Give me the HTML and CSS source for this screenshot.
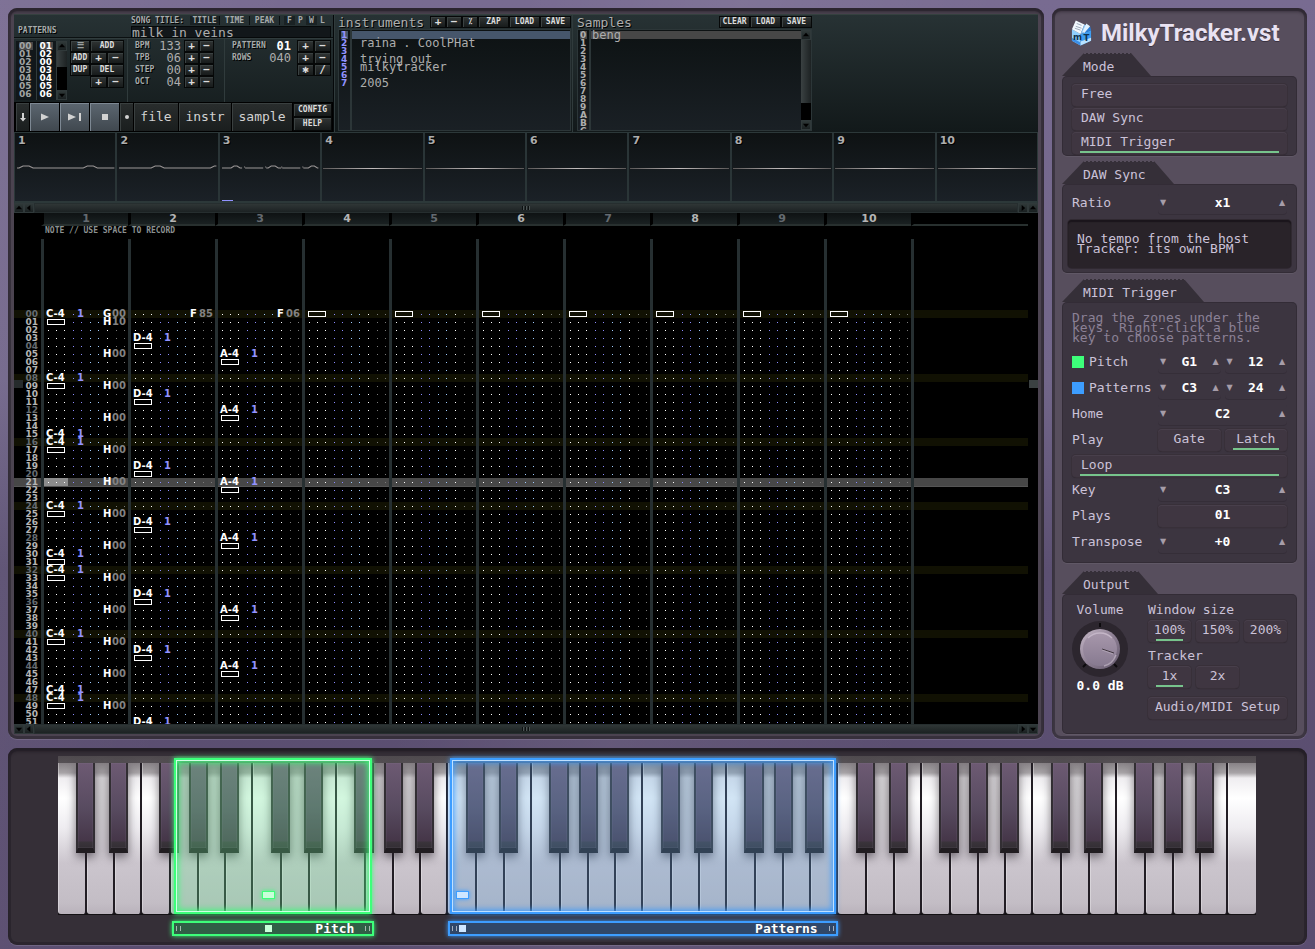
FILE: index.html
```html
<!DOCTYPE html>
<html lang="en">
<head>
<meta charset="utf-8">
<title>MilkyTracker.vst</title>
<link rel="stylesheet" href="styles.css">
</head>
<body>
<main class="tracker frame">
  <section class="deck">
    <div class="control">
      <div class="control-head">
        <span class="tiny patterns-label">PATTERNS</span>
        <div class="song">
          <div class="song-tabs tiny">
            <label for="song" class="song-label">SONG TITLE:</label>
            <button class="tab on">TITLE</button><button class="tab">TIME</button><button class="tab">PEAK</button>
            <span class="flags"><button class="flag on">F</button><button class="flag">P</button><button class="flag on">W</button><button class="flag">L</button></span>
          </div>
          <input id="song" class="song-title" value="milk in veins" spellcheck="false">
        </div>
      </div>
      <div class="control-mid">
        <div class="orders">
          <div class="order-list">
            <ol class="nums dim"><li class="sel">00</li><li>01</li><li>02</li><li>03</li><li>04</li><li>05</li><li>06</li></ol>
            <ol class="nums lit"><li class="sel">01</li><li>02</li><li>00</li><li>03</li><li>04</li><li>05</li><li>06</li></ol>
            <div class="vbar"><button class="arrow" aria-label="Up"><svg viewBox="0 0 9 9"><path d="M1 6h7L4.500 2z"/></svg></button><i class="thumb short"></i><i class="track"></i><button class="arrow" aria-label="Down"><svg viewBox="0 0 9 9"><path d="M1 3h7L4.500 7z"/></svg></button></div>
          </div>
          <div class="order-buttons">
            <button class="btn menu">☰</button><button class="btn wide">ADD</button>
            <button class="btn">ADD</button><button class="btn sign">+</button><button class="btn sign">−</button>
            <button class="btn">DUP</button><button class="btn wide">DEL</button>
            <button class="btn sign second">+</button><button class="btn sign">−</button>
          </div>
        </div>
        <div class="params bpm">
          <span class="tiny">BPM</span><output>133</output><button class="btn sign">+</button><button class="btn sign">−</button>
          <span class="tiny">TPB</span><output>06</output><button class="btn sign">+</button><button class="btn sign">−</button>
          <span class="tiny">STEP</span><output>00</output><button class="btn sign">+</button><button class="btn sign">−</button>
          <span class="tiny">OCT</span><output>04</output><button class="btn sign">+</button><button class="btn sign">−</button>
        </div>
        <div class="params pat">
          <span class="tiny">PATTERN</span><output class="hot">01</output><button class="btn sign">+</button><button class="btn sign">−</button>
          <span class="tiny">ROWS</span><output>040</output><button class="btn sign">+</button><button class="btn sign">−</button>
          <span></span><span></span><button class="btn sign">✱</button><button class="btn sign">/</button>
        </div>
      </div>
      <div class="transport">
        <button class="big s" aria-label="Follow"><svg viewBox="0 0 10 10"><path d="M4 1h2v5h2L5 9.500 2 6h2z"/></svg></button>
        <button class="big play" aria-label="Play"><svg viewBox="0 0 10 10"><path d="M1 1.500v7L9 5z"/></svg></button>
        <button class="big play" aria-label="Play pattern"><svg class="w" viewBox="0 0 14 10"><path d="M0 1.500v7L8 5zM11 1h2v8h-2z"/></svg></button>
        <button class="big play" aria-label="Stop"><svg viewBox="0 0 10 10"><path d="M2 2h6v6H2z"/></svg></button>
        <button class="big s" aria-label="Record"><svg viewBox="0 0 10 10"><circle cx="5" cy="5" r="2"/></svg></button>
        <button class="big file">file</button><button class="big instr">instr</button><button class="big sample">sample</button>
        <div class="stack"><button class="btn">CONFIG</button><button class="btn">HELP</button></div>
      </div>
    </div>
    <div class="bank instruments">
      <div class="bank-head"><h2>instruments</h2><span class="group"><button class="btn sign k">+</button><button class="btn sign k">−</button><button class="btn k">⁒</button><button class="btn">ZAP</button><button class="btn">LOAD</button><button class="btn">SAVE</button></span></div>
      <div class="list">
        <ol class="nums blue"><li class="sel">1</li><li>2</li><li>3</li><li>4</li><li>5</li><li>6</li><li>7</li></ol>
        <ul class="names"><li class="sel"></li><li>raina . CoolPHat</li><li></li><li>trying out</li><li>milkytracker</li><li></li><li>2005</li></ul>
      </div>
    </div>
    <div class="bank samples">
      <div class="bank-head"><h2>Samples</h2><span class="group"><button class="btn">CLEAR</button><button class="btn">LOAD</button><button class="btn">SAVE</button></span></div>
      <div class="list">
        <ol class="nums"><li class="sel">0</li><li>1</li><li>2</li><li>3</li><li>4</li><li>5</li><li>6</li><li>7</li><li>8</li><li>9</li><li>A</li><li>B</li><li>C</li></ol>
        <ul class="names"><li class="sel">beng</li></ul>
        <div class="vbar"><button class="arrow" aria-label="Up"><svg viewBox="0 0 9 9"><path d="M1 6h7L4.500 2z"/></svg></button><i class="thumb"></i><i class="track"></i><button class="arrow" aria-label="Down"><svg viewBox="0 0 9 9"><path d="M1 3h7L4.500 7z"/></svg></button></div>
      </div>
    </div>
  </section>
  <section class="scopes" id="scopes"></section>
  <div class="hbar"><button class="arrow" aria-label="Up"><svg viewBox="0 0 9 9"><path d="M1 6h7L4.500 2z"/></svg></button><button class="arrow" aria-label="Left"><svg viewBox="0 0 9 9"><path d="M6 1v7L2 4.500z"/></svg></button><i class="slide"></i><button class="arrow" aria-label="Right"><svg viewBox="0 0 9 9"><path d="M3 1v7l4-3.500z"/></svg></button><button class="arrow" aria-label="Up"><svg viewBox="0 0 9 9"><path d="M1 6h7L4.500 2z"/></svg></button></div>
  <section class="pattern">
    <i class="marker"></i><i class="marker end"></i>
    <table class="grid">
      <colgroup><col class="c-num"><col class="c-ch" span="10"><col></colgroup>
      <thead id="head"></thead>
      <tbody id="rows"></tbody>
    </table>
  </section>
  <div class="hbar"><button class="arrow" aria-label="Down"><svg viewBox="0 0 9 9"><path d="M1 3h7L4.500 7z"/></svg></button><button class="arrow" aria-label="Left"><svg viewBox="0 0 9 9"><path d="M6 1v7L2 4.500z"/></svg></button><i class="slide"></i><button class="arrow" aria-label="Right"><svg viewBox="0 0 9 9"><path d="M3 1v7l4-3.500z"/></svg></button><button class="arrow" aria-label="Down"><svg viewBox="0 0 9 9"><path d="M1 3h7L4.500 7z"/></svg></button></div>
</main>

<aside class="side frame">
  <header class="brand">
    <svg class="logo" viewBox="0 0 22 28">
      <path d="M1 10l9 5v12L1 22z" fill="#8fd0ff"/><path d="M1 19l9 5v3L1 22z" fill="#3b8fe8"/>
      <path d="M10 15l11-4v11l-11 5z" fill="#3f9df0"/><path d="M10 23l11-4v3l-11 5z" fill="#b9e2ff"/>
      <path d="M1 10L5 1l9 4-4 10z" fill="#f2f9ff"/><path d="M10 15l4-10 2 1-3 8z" fill="#8ac6f8"/><path d="M13 14l7-7 1 4z" fill="#2a7fdc"/><path d="M12 13l4-9 4 3-6 7z" fill="#dff1ff"/>
      <path d="M6 4l5 2M5 7l6 2M4 9l6 2" stroke="#9aa7b8" fill="none"/>
      <text x="2" y="21" class="logo-text">m</text><text x="13" y="22" class="logo-text">T</text>
    </svg>
    <h1>MilkyTracker.vst</h1>
  </header>

  <section class="group-box">
    <h2 class="cap mode-cap">Mode</h2>
    <div class="box mode">
      <button class="key left">Free</button><button class="key left">DAW Sync</button><button class="key left on">MIDI Trigger</button>
    </div>
  </section>

  <section class="group-box second-box">
    <h2 class="cap daw-cap">DAW Sync</h2>
    <div class="box daw">
      <div class="row"><span>Ratio</span><div class="step"><button aria-label="Lower">▼</button><output>x1</output><button aria-label="Raise">▲</button></div></div>
      <p class="lcd">No tempo from the host<br>Tracker: its own BPM</p>
    </div>
  </section>

  <section class="group-box third-box">
    <h2 class="cap midi-cap">MIDI Trigger</h2>
    <div class="box midi">
      <p class="hint">Drag the zones under the<br>keys. Right-click a blue<br>key to choose patterns.</p>
      <div class="row"><span class="sw green">Pitch</span><div class="step"><button aria-label="Lower">▼</button><output>G1</output><button aria-label="Raise">▲</button></div><div class="step"><button aria-label="Lower">▼</button><output>12</output><button aria-label="Raise">▲</button></div></div>
      <div class="row"><span class="sw azure">Patterns</span><div class="step"><button aria-label="Lower">▼</button><output>C3</output><button aria-label="Raise">▲</button></div><div class="step"><button aria-label="Lower">▼</button><output>24</output><button aria-label="Raise">▲</button></div></div>
      <div class="row"><span>Home</span><div class="step"><button aria-label="Lower">▼</button><output>C2</output><button aria-label="Raise">▲</button></div></div>
      <div class="row"><span>Play</span><button class="key">Gate</button><button class="key on">Latch</button></div>
      <button class="key left on loop">Loop</button>
      <div class="row"><span>Key</span><div class="step"><button aria-label="Lower">▼</button><output>C3</output><button aria-label="Raise">▲</button></div></div>
      <div class="row"><span>Plays</span><button class="key bright">01</button></div>
      <div class="row"><span>Transpose</span><div class="step"><button aria-label="Lower">▼</button><output>+0</output><button aria-label="Raise">▲</button></div></div>
    </div>
  </section>

  <section class="group-box last">
    <h2 class="cap out-cap">Output</h2>
    <div class="box output">
      <div class="volume">
        <label for="vol">Volume</label>
        <div class="knob">
          <svg viewBox="0 0 56 56">
            <defs><linearGradient id="kg" x1="0" y1="0" x2="1" y2="1"><stop offset="0" stop-color="#c9bccb"/><stop offset=".5" stop-color="#8d7f93"/><stop offset="1" stop-color="#655a6e"/></linearGradient>
            <linearGradient id="kf" x1="0" y1="0" x2="0" y2="1"><stop offset="0" stop-color="#a898ac"/><stop offset="1" stop-color="#877a90"/></linearGradient></defs>
            <circle cx="28" cy="28" r="28" fill="#2c262e"/>
            <path d="M28 2v4M11 46l3-3M45 46l-3-3" stroke="#0c0a0d" stroke-width="2"/>
            <circle cx="28" cy="28" r="20" fill="url(#kg)"/><circle cx="28" cy="28" r="17" fill="url(#kf)"/>
            <path d="M16 17a17 17 0 0 1 24 0M44 34a17 17 0 0 1-12 11" stroke="#e2d5e4" stroke-width="1.500" fill="none" opacity=".5"/>
            <path d="M30 28l12 4" stroke="#40363f"/><path d="M30 29l11 4" stroke="#b9adbd" stroke-width=".7"/>
          </svg>
          <input id="vol" type="range" min="-48" max="12" value="0">
        </div>
        <output for="vol">0.0 dB</output>
      </div>
      <div class="opts">
        <h3>Window size</h3>
        <div class="trio"><button class="key on">100%</button><button class="key">150%</button><button class="key">200%</button></div>
        <h3>Tracker</h3>
        <div class="trio"><button class="key on">1x</button><button class="key">2x</button></div>
        <button class="key setup">Audio/MIDI Setup</button>
      </div>
    </div>
  </section>
</aside>

<section class="piano frame">
  <div class="keybed">
    <div class="keys" id="keys"></div>
    <div class="zone pitch"></div>
    <div class="zone patterns"></div>
    <i class="pin pin-g"></i><i class="pin pin-b"></i>
  </div>
  <div class="ranges">
    <div class="range pitch"><i class="grip"></i><i class="dot mid"></i><span>Pitch</span><i class="grip"></i></div>
    <div class="range patterns"><i class="grip"></i><i class="dot start"></i><span>Patterns</span><i class="grip"></i></div>
  </div>
</section>
<script src="app.js"></script>
</body>
</html>
```

FILE: app.js
```javascript
const CHANNELS = [
  { note: 'C-4', on: [0, 8, 15, 16, 24, 30, 32, 40, 47, 48], off: [1, 9, 17, 25, 31, 33, 41, 49],
    fx: { 0: 'G00', 1: 'H10', 5: 'H00', 9: 'H00', 13: 'H00', 17: 'H00', 21: 'H00', 25: 'H00', 29: 'H00', 33: 'H00', 37: 'H00', 41: 'H00', 45: 'H00', 49: 'H00' } },
  { note: 'D-4', on: [3, 10, 19, 26, 35, 42, 51], off: [4, 11, 20, 27, 36, 43], fx: { 0: 'F85' } },
  { note: 'A-4', on: [5, 12, 21, 28, 37, 44], off: [6, 13, 22, 29, 38, 45], fx: { 0: 'F06' } }
];
while (CHANNELS.length < 10) CHANNELS.push({ note: '', on: [], off: [0], fx: {} });

// Pattern header: channel numbers, status line, empty lead-in
const gaps = '<td></td>'.repeat(11);
document.getElementById('head').innerHTML =
  '<tr class="chans"><td></td>' + CHANNELS.map((c, i) => `<th class="${i % 2 ? 'even' : 'odd'}">${i + 1}</th>`).join('') + '<td></td></tr>' +
  '<tr class="status"><td></td><td colspan="11" class="tiny">NOTE // USE SPACE TO RECORD</td></tr>' +
  `<tr class="lead"><td></td>${gaps}</tr>`;

function cell(c, r) {
  const note = c.on.includes(r) ? `<b class="note">${c.note}</b><b class="ins">1</b>`
    : c.off.includes(r) ? '<i class="note off"></i><i class="d ins0"></i>'
    : '<i class="d n0"></i><i class="d ins0"></i>';
  const f = c.fx[r];
  const fx = f ? `<b class="fx">${f[0]}</b><b class="val">${f.slice(1)}</b>` : '<i class="d f0"></i><i class="d v0"></i>';
  return `<td><div class="cell">${note}<i class="d vol"></i>${fx}</div></td>`;
}
let rows = '';
for (let r = 0; r < 52; r++) {
  const cls = (r % 8 ? '' : 'beat ') + (r % 4 ? '' : 'quarter ') + (r === 21 ? 'current' : '');
  rows += `<tr class="${cls}"><th>${String(r).padStart(2, '0')}</th>${CHANNELS.map(c => cell(c, r)).join('')}<td></td></tr>`;
}
document.getElementById('rows').innerHTML = rows;

// Oscilloscopes
const WAVES = {
  1: 'M2 5h2l4-2h6l4 2h50l4-2h6l4 2h17',
  2: 'M2 5h32l4-2h5l4 2h46l4-2h2',
  3: 'M2 5h9l3-2h3l3 2h2M24 4h1M25 5h18M45 4h1M46 5h2l3-2h4l3 2h3M61 4h1M62 5h18M82 4h1M83 5h5l3-2h3l3 2h1'
};
document.getElementById('scopes').innerHTML = CHANNELS.map((c, i) => {
  const w = WAVES[i + 1];
  return `<div class="scope"><span>${i + 1}</span>${w
    ? `<svg viewBox="0 0 100 8" preserveAspectRatio="none"><path d="${w}"/></svg>`
    : '<i class="flat"></i>'}${i === 2 ? '<i class="level"></i>' : ''}</div>`;
}).join('');

// Six octaves and a top C
const NAMES = ['c', 'd', 'e', 'f', 'g', 'a', 'b'], SHARPS = ['cs', 'ds', 'fs', 'gs', 'as'];
let keys = '';
for (let o = 0; o < 6; o++) {
  keys += '<div class="octave">' + NAMES.map(n => `<button class="white k-${n}" aria-label="${n}${o}"></button>`).join('') +
    SHARPS.map(n => `<button class="black ${n}" aria-label="${n}${o}"></button>`).join('') + '</div>';
}
document.getElementById('keys').innerHTML = keys + '<button class="white top" aria-label="c6"></button>';
```

FILE: styles.css
```css
* { box-sizing: border-box; }
body {
  margin: 0; height: 100vh; padding: 8px 8px 4px;
  display: grid; grid-template-columns: minmax(0, 1fr) 255px; grid-template-rows: minmax(0, 1fr) 197px; gap: 9px 8px;
  font: 13px/10px "DejaVu Sans Mono", "Liberation Mono", monospace; color: #cbc2d8;
  background: linear-gradient(100deg, rgba(255,255,255,.05), transparent 20% 35%, rgba(255,255,255,.06) 50%, transparent 70%), linear-gradient(#786b91, #72668a 40%, #5c5072 60%, #5a4d70);
}
button, input { font: inherit; color: inherit; border: 0; margin: 0; padding: 0; background: none; }
button { display: flex; align-items: center; justify-content: center; }
h1, h2, h3, p, ol, ul { margin: 0; padding: 0; font-weight: normal; font-size: inherit; list-style: none; }
i { display: block; font-style: normal; }
.frame { border-radius: 9px; box-shadow: inset 0 0 0 3px rgba(32,27,36,.45), inset 0 4px 3px rgba(20,16,22,.4), 0 1px rgba(255,255,255,.12); background: #4b4350; }
.tiny { font: bold 8px/8px "DejaVu Sans Mono", monospace; color: #a6abab; text-shadow: 1px 1px #000; }

/* Tracker */
.tracker { padding: 6px 6px 5px; display: flex; flex-direction: column; min-height: 0; }
.deck { display: flex; height: 118px; flex: none; background: linear-gradient(#273234, #12191a); color: #adadad; border-top: 1px solid #35413f; }
.control { width: 320px; border-right: 1px solid #05080a; display: flex; flex-direction: column; }
.control-head { height: 23px; display: flex; justify-content: space-between; padding: 0 2px 0 4px; border-bottom: 1px solid #0b1011; }
.patterns-label { padding-top: 12px; }
.song { width: 200px; }
.song-tabs { display: flex; height: 11px; align-items: center; }
.song-label { width: 59px; }
.tab { width: 30px; height: 9px; border-right: 1px solid #0a0f10; }
.on.tab, .on.flag { background: #1a2224; }
.flags { display: flex; margin-left: 4px; }
.flag { width: 11px; height: 9px; }
.song-title { display: block; width: 100%; height: 12px; line-height: 10px; background: #12171a; border: 1px solid #06090a; color: #adadad; }
.control-mid { display: flex; height: 64px; border-top: 1px solid #303b3c; }
.orders { width: 114px; display: flex; gap: 3px; padding: 2px 0 0 2px; border-right: 1px solid #303b3c; }
.order-list { display: flex; width: 51px; height: 59px; background: #11171a; overflow: hidden; flex: none; }
.nums { font: bold 9px/8px "DejaVu Sans", sans-serif; }
.nums li { height: 8px; }
.order-list .nums { width: 21px; padding: 1px 3px 0; border-right: 1px solid #303b3c; }
.order-list .sel, .samples .sel { background: #474747; }
.dim { color: #a0a4a4; }
.lit { color: #fff; }
.vbar { width: 10px; display: flex; flex-direction: column; background: #000; margin-left: auto; }
.arrow { width: 10px; height: 10px; flex: none; background: linear-gradient(#2f3838, #1a2021); border: 1px solid #30393a; }
.arrow svg { width: 8px; height: 8px; flex: none; fill: #000; }
.thumb { height: 63px; background: linear-gradient(90deg, #3a4142, #1d2223); }
.thumb.short { height: 16px; }
.track { flex: 1; }
.order-buttons { display: grid; grid-template-columns: 20px 17px 17px; grid-auto-rows: 12px; align-content: start; margin-top: -1px; }
.btn { font: bold 8px/8px "DejaVu Sans Mono", monospace; color: #dcdcdc; background: linear-gradient(#303434, #171b1b); border: 1px solid #060808; box-shadow: inset 1px 1px #3b4242; height: 12px; }
.btn.sign { font-size: 11px; }
.btn.wide { grid-column: 2 / 4; }
.btn.second { grid-column: 2; }
.btn.menu { color: #9a9f9f; }
.params { display: grid; grid-auto-rows: 12px; align-content: start; align-items: center; padding: 1px 2px 0 7px; }
.params .btn { align-self: stretch; }
.params output { text-align: right; padding-right: 3px; font-size: 12px; }
.bpm { width: 97px; grid-template-columns: 24px 1fr 15px 15px; border-right: 1px solid #303b3c; padding-right: 10px; }
.pat { flex: 1; grid-template-columns: 37px 1fr 17px 17px; }
.params .hot { color: #fff; font-weight: bold; }
.pat output { padding-right: 6px; }
.transport { flex: 1; display: flex; gap: 1px; background: #000; padding: 1px 1px 1px 2px; }
.big { background: linear-gradient(#292d2d, #1a1e1e); box-shadow: inset 1px 1px #3a4040; color: #d2d2d2; }
.big svg { width: 10px; height: 10px; fill: #d2d2d2; }
.big svg.w { width: 14px; }
.s { width: 13px; }
.play { width: 29px; background: linear-gradient(#5c6670, #40484f); box-shadow: inset 1px 1px #7d8893; }
.file { width: 44px; }
.instr { width: 52px; }
.sample { width: 60px; }
.stack { flex: 1; display: grid; grid-template-rows: 1fr 1fr; }
.stack .btn { height: auto; }
.bank { display: flex; flex-direction: column; padding: 1px 1px 1px 3px; border-left: 1px solid #303b3c; }
.instruments { width: 238px; }
.samples { width: 241px; padding-left: 4px; }
.bank-head { display: flex; justify-content: space-between; height: 13px; }
.bank-head h2 { padding-top: 2px; text-shadow: 1px 1px #000; }
.bank-head .group { display: flex; }
.bank-head .btn { width: 31px; }
.bank-head .btn.k { width: 16px; }
.list { flex: 1; min-height: 0; display: flex; background: linear-gradient(#0d1213, #1a2025); border: 1px solid #2c3638; overflow: hidden; }
.list .nums { width: 13px; padding: 1px 2px 0; border-right: 2px solid #2c3638; flex: none; }
.names { flex: 1; padding-top: 1px; font-size: 12px; }
.names li { height: 8px; line-height: 8px; padding-left: 8px; white-space: pre; }
.samples .names li { padding-left: 1px; }
.blue { color: #9292ff; }
.instruments .sel { background: #46566b; }
.scopes { display: flex; height: 71px; flex: none; border: 1px solid #2c3839; border-width: 1px 1px 2px; }
.scope { flex: 1; position: relative; background: linear-gradient(#0e1213, #1b2127); border-right: 2px solid #2a3537; display: flex; align-items: center; color: #adadad; }
.scope:last-child { border: 0; }
.scope span { position: absolute; left: 3px; top: 3px; font: bold 11px/10px "DejaVu Sans", sans-serif; text-shadow: 1px 1px #000; }
.scope svg { width: 100%; height: 8px; fill: none; stroke: #9c9797; stroke-width: 1; }
.flat { flex: 1; height: 1px; background: linear-gradient(90deg, #5a5757, #c3bdbd, #5a5757); margin: 2px 1px 0; }
.level { position: absolute; left: 2px; bottom: 0; width: 11px; height: 1px; background: #9292ff; }
.hbar { display: flex; height: 10px; flex: none; }
.slide { flex: 1; border: 1px solid #262e2f; background: repeating-linear-gradient(90deg, #0c1010 0 1px, #4b5353 1px 2px, transparent 2px 3px) center / 9px 4px no-repeat, linear-gradient(#2f3636, #1c2223); }

/* Pattern editor */
.pattern { position: relative; flex: 1; min-height: 0; overflow: hidden; background: #000; padding-right: 10px; }
.marker { position: absolute; left: 0; top: 167px; width: 9px; height: 8px; background: #262b2c; }
.marker.end { left: auto; right: 0; background: #3b4142; }
.grid { width: 100%; table-layout: fixed; border-spacing: 0; border-collapse: separate; color: #fff; }
.c-num { width: 27px; }
.c-ch { width: 87px; }
.grid td, .grid th { padding: 0; height: 8px; line-height: 8px; }
.grid .chans th, .grid .chans td { height: 13px; border-left: 3px solid #000; border-bottom: 2px solid #28302f; }
.grid .chans th { background: linear-gradient(#0e1213, #1a2122); font: bold 11px/10px "DejaVu Sans", sans-serif; }
.grid .chans td:first-child { border-bottom-color: #000; }
.odd { color: #646a70; }
.even { color: #b4b4b4; }
.grid .status td { height: 13px; padding: 0 0 4px 4px; color: #8b9191; }
.grid .lead td { height: 71px; }
.grid .lead td + td, tbody td { border-left: 3px solid #262f31; }
tbody th { font: bold 9px/8px "DejaVu Sans", sans-serif; color: #b5b5b5; text-align: right; }
.grid tbody th { padding-right: 3px; }
.grid tbody .quarter th { color: #666c72; }
.beat td, .beat th { background: #111103; }
.grid .current th, .grid .current td { background: #474747; color: #b5b5b5; box-shadow: 0 1px #555; }
.grid .current td:nth-child(2) { background: linear-gradient(#8c8c8c, #8c8c8c) 0 0 / 24px 8px no-repeat #474747; }
.cell { display: grid; grid-template-columns: 25px 17px 17px 9px 16px; height: 8px; font: bold 10px/8px "DejaVu Sans", sans-serif; color: #fff; }
.note { padding-left: 2px; }
.d, .ins { height: 8px; background: linear-gradient(90deg, transparent 4px, var(--c) 4px, var(--c) 5px, transparent 5px) 0 4px / 8px 1px repeat-x; }
.n0, .f0 { --c: #fff; }
.ins0, .ins { --c: #8c8cff; }
.vol { --c: #a0ccff; }
.v0 { --c: #7b7b7b; }
.ins { background-repeat: no-repeat; color: #9292ff; padding-left: 8px; }
.note.off { width: 18px; height: 6px; margin: 1px 0 0 3px; border: 1px solid #fff; padding: 0; }
.val { color: #828282; }

/* Side panel */
.side { padding: 10px; background: #574e5d; }
.brand { display: flex; gap: 9px; height: 35px; padding: 1px 0 0 9px; }
.logo { width: 21px; height: 28px; flex: none; }
.logo-text { font: bold 9px "DejaVu Sans", sans-serif; fill: #10324f; }
.brand h1 { font: bold 24px/28px Roboto, sans-serif; color: #e9e2f2; text-shadow: 0 1px #3a3240; }
.group-box { margin-bottom: 5px; }
.group-box.second-box { margin-bottom: 6px; }
.group-box.third-box { margin-bottom: 8px; }
.group-box.last { margin-bottom: 0; }
.cap { height: 23px; padding: 9px 0 0 21px; background: repeating-linear-gradient(90deg, #352f38 0 2px, transparent 2px 4px) 0 0 / 100% 1px no-repeat, linear-gradient(#352f38, #352f38) 0 1px no-repeat; clip-path: polygon(0 100%, 22px 0, calc(100% - 20px) 0, 100% 100%); }
.mode-cap { width: 89px; }
.daw-cap { width: 112px; }
.midi-cap { width: 142px; }
.out-cap { width: 96px; }
.box { background: #3c3540; border-radius: 5px; box-shadow: inset 0 0 0 1px rgba(34,28,37,.35), 0 1px rgba(255,255,255,.06); }
.key { height: 22px; padding-bottom: 3px; background: #3f3641; border-radius: 4px; box-shadow: inset 0 1px #483f4b, 0 0 0 1px #383039, 0 1px 1px #2a242c; position: relative; flex: 1; min-width: 0; white-space: nowrap; }
.key.left { width: 100%; justify-content: flex-start; padding-left: 9px; flex: none; }
.key.on::after { content: ""; position: absolute; left: 8px; right: 8px; bottom: 1px; height: 2px; background: #77c48c; }
.mode { height: 80px; padding: 8px 10px 0; display: grid; gap: 2px; align-content: start; }
.row { display: flex; gap: 4px; height: 22px; align-items: center; }
.row > span:first-child { width: 82px; flex: none; }
.step { flex: 1; min-width: 0; display: flex; align-items: center; justify-content: space-between; height: 22px; box-shadow: 0 1px #352e38; border-radius: 4px; }
.step button { font: 8px/10px "DejaVu Sans", sans-serif; color: #a69da9; width: 10px; }
.step output, .bright, .volume output { color: #fff; font-weight: bold; }
.daw { height: 89px; padding: 8px 6px 0; }
.daw .row { padding: 0 4px; }
.lcd { margin-top: 6px; height: 48px; padding: 14px 0 0 9px; background: #292329; border-radius: 4px; box-shadow: inset 0 2px 1px #1a151b, 0 0 0 1px #302931; white-space: nowrap; }
.midi { height: 261px; padding: 11px 10px 0; display: flex; flex-direction: column; gap: 4px; }
.hint { height: 34px; color: #8b8196; white-space: nowrap; }
.sw { position: relative; display: flex; align-items: center; gap: 5px; }
.sw::before { content: ""; width: 12px; height: 12px; flex: none; background: #3dff7a; }
.azure::before { background: #3d9dff; }
.key.loop { margin-bottom: -2px; }
.output { height: 140px; padding: 11px 10px 0; display: flex; justify-content: space-between; gap: 20px; }
.volume { width: 56px; text-align: center; display: flex; flex-direction: column; align-items: center; white-space: nowrap; }
.knob { position: relative; width: 56px; height: 56px; margin: 6px 0 4px; }
.knob svg { display: block; width: 56px; height: 56px; }
.knob input { position: absolute; inset: 0; width: 100%; height: 100%; opacity: 0; }
.opts { flex: 1; min-width: 0; display: flex; flex-direction: column; }
.trio { display: grid; grid-template-columns: repeat(3, 1fr); gap: 5px; margin: 5px 0 9px; }
.setup { width: 100%; flex: none; }

/* Keyboard */
.piano { grid-column: 1 / 3; padding: 8px 51px 0 50px; background: #352f37; }
.keybed { position: relative; height: 159px; background: linear-gradient(#4f4a4e, #565155 7px, #141114 7px); }
.keys { display: flex; height: 100%; padding-top: 7px; }
.octave { position: relative; display: flex; flex: 1; }
.white { height: 151px; border-left: 1px solid #ffffff50; border-right: 2px solid #221d24; border-radius: 0 0 3px 3px; background: linear-gradient(#878286, #a8a4a7 10px, #efedf0 15px, #fff 35px, #eeecf0 65px, #cbc5cd 100px, #c3bdc5 140px, #b9b2bb); }
.k-d, .k-g, .k-a { background: linear-gradient(#878286, #a8a4a7 10px, #d9d6d9 15px, #d3d0d3 45px, #cbc5cd 100px, #c3bdc5 140px, #b9b2bb); }
.k-c, .k-f { flex: 29; }
.k-d, .k-g { flex: 28; }
.k-e, .k-a, .k-b { flex: 27; }
.top { flex: 0 0 28px; border-right: 0; }
.black { position: absolute; top: 0; width: 10%; height: 90px; border: 2px solid #322e33; border-top: 0; border-bottom: 5px solid #211d21; background: linear-gradient(#6d5a73, #584b60 45px, #453648 78px, #3a343b 79px, #332e34); box-shadow: 0 4px 10px rgba(40,34,44,.6), inset 0 0 1px #988a9e; }
.cs { left: 9%; }
.ds { left: 26%; }
.fs { left: 52%; }
.gs { left: 67%; }
.as { left: 83%; }
.pitch { --z: #3dff7a; --fill: rgba(110,230,150,.3); }
.patterns { --z: #3d9dff; --fill: rgba(95,160,220,.28); }
.zone { position: absolute; top: 2px; bottom: 1px; border: 2px solid var(--z); background: var(--fill); box-shadow: 0 0 5px var(--z), inset 0 0 0 1px #d0ffe5, inset 0 0 6px 2px var(--z); }
.zone.pitch { left: calc(10% - 4px); width: calc(17% - 5px); }
.zone.patterns { left: calc(33% - 3px); width: calc(32% + 2px); box-shadow: 0 0 5px var(--z), inset 0 0 0 1px #bfe0ff, inset 0 0 6px 2px var(--z); }
.pin { position: absolute; top: 135px; width: 13px; height: 8px; }
.pin-g { left: 17%; background: #c8ffd9; border: 1px solid #3dff7a; box-shadow: 0 0 4px #3dff7a; }
.pin-b { left: calc(33% + 3px); background: #cfe6ff; border: 1px solid #3d9dff; box-shadow: 0 0 4px #3d9dff; }
.ranges { position: relative; height: 25px; }
.range { position: absolute; top: 6px; height: 15px; border: 2px solid var(--z); background: color-mix(in srgb, var(--z) 25%, #2b2a35); box-shadow: 0 0 5px var(--z); color: #fff; font-weight: bold; display: flex; align-items: center; justify-content: space-between; padding: 0 2px; }
.range.pitch { left: calc(10% - 6px); width: calc(17% - 1px); }
.range.patterns { left: calc(33% - 5px); width: calc(32% + 6px); }
.range span { margin-left: auto; margin-right: 11px; }
.grip { width: 5px; height: 5px; border: 1px solid #ffffff90; border-width: 0 1px; }
.range .dot { position: absolute; width: 7px; height: 7px; background: #cfe6ff; }
.range.pitch .dot { background: #c8ffd9; }
.mid { left: 46%; }
.start { left: 9px; }
```
